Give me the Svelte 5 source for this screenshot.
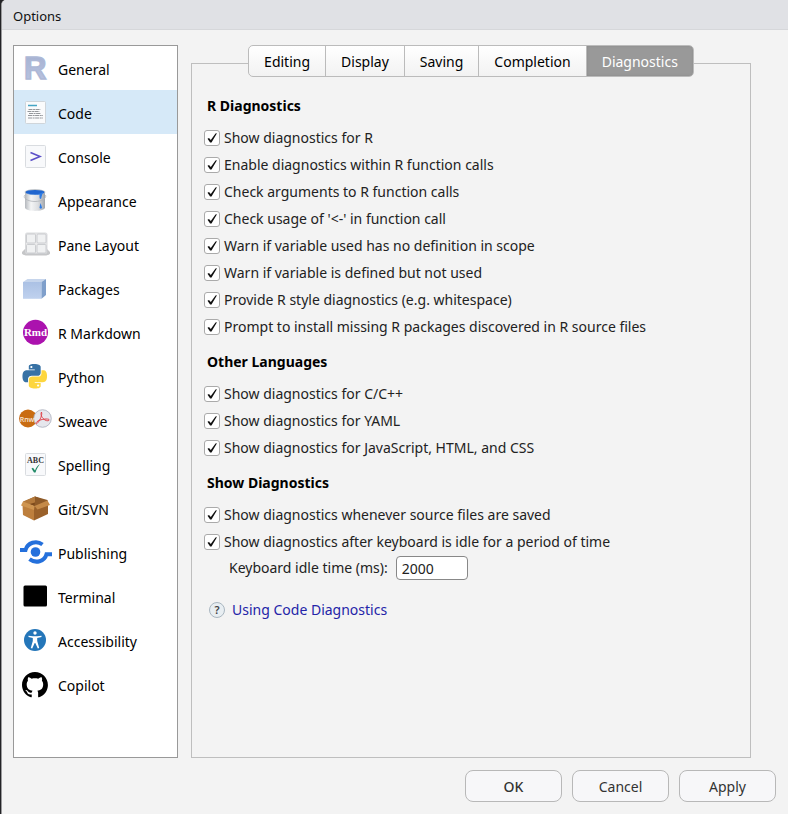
<script>
  const categories = [
    { id: 'general', label: 'General' },
    { id: 'code', label: 'Code' },
    { id: 'console', label: 'Console' },
    { id: 'appearance', label: 'Appearance' },
    { id: 'panes', label: 'Pane Layout' },
    { id: 'packages', label: 'Packages' },
    { id: 'rmarkdown', label: 'R Markdown' },
    { id: 'python', label: 'Python' },
    { id: 'sweave', label: 'Sweave' },
    { id: 'spelling', label: 'Spelling' },
    { id: 'git', label: 'Git/SVN' },
    { id: 'publishing', label: 'Publishing' },
    { id: 'terminal', label: 'Terminal' },
    { id: 'accessibility', label: 'Accessibility' },
    { id: 'copilot', label: 'Copilot' }
  ];
  let category = $state('code');

  const tabs = ['Editing', 'Display', 'Saving', 'Completion', 'Diagnostics'];
  let tab = $state('Diagnostics');

  let sections = $state([
    {
      title: 'R Diagnostics',
      options: [
        { label: 'Show diagnostics for R', on: true },
        { label: 'Enable diagnostics within R function calls', on: true },
        { label: 'Check arguments to R function calls', on: true },
        { label: "Check usage of '<-' in function call", on: true },
        { label: 'Warn if variable used has no definition in scope', on: true },
        { label: 'Warn if variable is defined but not used', on: true },
        { label: 'Provide R style diagnostics (e.g. whitespace)', on: true },
        { label: 'Prompt to install missing R packages discovered in R source files', on: true }
      ]
    },
    {
      title: 'Other Languages',
      options: [
        { label: 'Show diagnostics for C/C++', on: true },
        { label: 'Show diagnostics for YAML', on: true },
        { label: 'Show diagnostics for JavaScript, HTML, and CSS', on: true }
      ]
    },
    {
      title: 'Show Diagnostics',
      options: [
        { label: 'Show diagnostics whenever source files are saved', on: true },
        { label: 'Show diagnostics after keyboard is idle for a period of time', on: true }
      ]
    }
  ]);
  let idle = $state('2000');
</script>

{#snippet icon(id)}
  <svg class="icon" viewBox="0 0 36 28" aria-hidden="true">
    {#if id === 'general'}
      <defs>
        <linearGradient id="r-fill" x1="0" y1="0" x2="0" y2="1">
          <stop offset="0" stop-color="#a3afd0" /><stop offset="1" stop-color="#bcc6e2" />
        </linearGradient>
      </defs>
      <text x="7" y="25" font-family="Liberation Sans" font-weight="700" font-size="31" fill="url(#r-fill)" stroke="#adb8d6" stroke-width="1.5">R</text>
    {:else if id === 'code'}
      <rect x="8.5" y="3.5" width="20" height="22" rx="1" fill="#fafbfc" stroke="#cfd5da" />
      <path d="M11 7.500h9" stroke="#45a5c4" stroke-width="1.5" />
      <path d="M11.500 11.500h12M10.500 13.500h12M12 15.500h12M11 17.500h15M11 20h15" stroke="#94979b" stroke-width="1.200" stroke-dasharray="4 .6 2 .5" />
    {:else if id === 'console'}
      <rect x="8.5" y="3.500" width="20" height="22" rx="1" fill="#f8f9fb" stroke="#d9dce0" />
      <path d="M13.500 10.500l9.500 4-9.500 4" fill="none" stroke="#5c50c8" stroke-width="1.600" />
    {:else if id === 'appearance'}
      <defs>
        <linearGradient id="can"><stop offset="0" stop-color="#b4b8bd" /><stop offset=".3" stop-color="#f4f5f6" /><stop offset=".65" stop-color="#dcdee1" /><stop offset="1" stop-color="#a0a4a9" /></linearGradient>
      </defs>
      <path d="M8 6v15.500c0 4.500 20 4.500 20 0V6z" fill="url(#can)" />
      <ellipse cx="18" cy="6" rx="10.500" ry="3" fill="#c3c8ce" />
      <ellipse cx="18" cy="6.200" rx="9.500" ry="2.300" fill="#2166cf" />
      <path d="M9 7c5 2 13 2 17-1l-1.500 5c0 2.500-2 2.500-2 0V8.500c-4 .8-9.500.6-13.500-1.500z" fill="#2e7be4" />
      <path d="M23.500 17l1.500 4.500c0 1.500-2.500 1.500-2.500 0z" fill="#2e7be4" />
      <path d="M8 9c-3 3 3 6.500 10 6.500s12-3.500 10.500-6.500" fill="none" stroke="#b0b4b9" stroke-width=".8" />
    {:else if id === 'panes'}
      <path d="M5 22l3-3h22l3 3v1.500c0 1-3 2-5 2H10c-2 0-5-1-5-2z" fill="#c5c6c8" />
      <rect x="8.500" y="3" width="21.500" height="20.500" rx="1.500" fill="#ececed" stroke="#d2d3d5" stroke-width=".8" />
      <g fill="#f0f1f2" stroke="#c2c4c8" stroke-width=".8">
        <rect x="9.500" y="4" width="9" height="9" rx="1" /><rect x="20" y="4" width="9" height="9" rx="1" />
        <rect x="9.500" y="14.500" width="9" height="8.500" rx="1" /><rect x="20" y="14.500" width="9" height="8.500" rx="1" />
      </g>
    {:else if id === 'packages'}
      <defs><linearGradient id="box-face" x1="0" y1="0" x2="0" y2="1"><stop offset="0" stop-color="#abc1e4" /><stop offset="1" stop-color="#bfd1ee" /></linearGradient></defs>
      <path d="M6 8h18.500v16.800H6z" fill="url(#box-face)" />
      <path d="M6 8l4.500-3H29l-4.500 3z" fill="#c6d5ec" />
      <path d="M24.500 8L29 5v16l-4.500 3.800z" fill="#7f9fcb" />
    {:else if id === 'rmarkdown'}
      <circle cx="18.500" cy="14.300" r="12.500" fill="#ab12ae" />
      <text x="18.500" y="17.500" text-anchor="middle" font-family="Liberation Serif" font-weight="700" font-size="11" fill="#fff">Rmd</text>
    {:else if id === 'python'}
      <g transform="translate(5.500 2) scale(1.020)">
        <path fill="#3872a5" d="M14.25.18l.9.2.73.26.59.3.45.32.34.34.25.34.16.33.1.3.04.26.02.2-.01.13V8.5l-.05.63-.13.55-.21.46-.26.38-.3.31-.33.25-.35.19-.35.14-.33.1-.3.07-.26.04-.21.02H8.77l-.69.05-.59.14-.5.22-.41.27-.33.32-.27.35-.2.36-.15.37-.1.35-.07.32-.04.27-.02.21v3.06H3.17l-.21-.03-.28-.07-.32-.12-.35-.18-.36-.26-.36-.36-.35-.46-.32-.59-.28-.73-.21-.88-.14-1.05-.05-1.23.06-1.22.16-1.04.24-.87.32-.71.36-.57.4-.44.42-.33.42-.24.4-.16.36-.1.32-.05.24-.01h.16l.06.01h8.16v-.83H6.18l-.01-2.75-.02-.37.05-.34.11-.31.17-.28.25-.26.31-.23.38-.2.44-.18.51-.15.58-.12.64-.1.71-.06.77-.04.84-.02 1.27.05zm-6.3 1.98l-.23.33-.08.41.08.41.23.34.33.22.41.09.41-.09.33-.22.23-.34.08-.41-.08-.41-.23-.33-.33-.22-.41-.09-.41.09z" />
        <path fill="#fdd63e" d="M21.040 6.110l.28.06.32.12.35.18.36.27.36.35.35.47.32.59.28.73.21.88.14 1.04.05 1.23-.06 1.23-.16 1.04-.24.86-.32.71-.36.57-.4.45-.42.33-.42.24-.4.16-.36.09-.32.05-.24.02-.16-.01h-8.22v.82h5.84l.01 2.76.02.36-.05.34-.11.31-.17.29-.25.25-.31.24-.38.2-.44.17-.51.15-.58.13-.64.09-.71.07-.77.04-.84.01-1.27-.04-1.07-.14-.9-.2-.73-.25-.59-.3-.45-.33-.34-.34-.25-.34-.16-.33-.1-.3-.04-.25-.02-.2.01-.13v-5.34l.05-.64.13-.54.21-.46.26-.38.3-.32.33-.24.35-.2.35-.14.33-.1.3-.06.26-.04.21-.02.13-.01h5.84l.69-.05.59-.14.5-.21.41-.28.33-.32.27-.35.2-.36.15-.36.1-.35.07-.32.04-.28.02-.21V6.070h2.09l.14.01zm-6.47 14.25l-.23.33-.08.41.08.41.23.33.33.23.41.08.41-.08.33-.23.23-.33.08-.41-.08-.41-.23-.33-.33-.23-.41-.08-.41.08z" />
      </g>
    {:else if id === 'sweave'}
      <circle cx="11" cy="12.500" r="9" fill="#c96c12" />
      <circle cx="25.500" cy="12.500" r="8.800" fill="#e6e7ed" stroke="#a9adbb" stroke-width=".8" />
      <text x="10" y="15.500" text-anchor="middle" font-family="Open Sans" font-weight="600" font-size="7" fill="#f8e6d2">Rnw</text>
      <path d="M24.500 6c-1.500 3 1 6.500 3.500 8s5 .5 4-.5-7.500-.5-11 1.500-2 4 0 1.500 4.500-7.500 3.500-10.500z" fill="none" stroke="#e0424a" stroke-width="1" />
    {:else if id === 'spelling'}
      <rect x="8.500" y="3.500" width="20" height="22" rx="1" fill="#f8f9fb" stroke="#d9dce0" />
      <text x="18.500" y="13" text-anchor="middle" font-family="Liberation Serif" font-weight="700" font-size="8" fill="#333">ABC</text>
      <path d="M14.500 18.500l1.500-.8 2 2.800c1-3 2.500-5 5-6.500-2 2.500-3.500 5-4.500 8.500h-1.500z" fill="#1f8a66" />
    {:else if id === 'git'}
      <path d="M6 8l12-5.500L31 7.500 19 13z" fill="#7d4a1c" />
      <path d="M5.500 11l11.500 4v11.500L6 21z" fill="#bd7f3d" />
      <path d="M17 13l14-4.500V20l-14 6.500z" fill="#9a612a" />
      <path d="M6 7.500l12-5v6L9 11z" fill="#b47a3c" />
      <path d="M18 2.500L30.500 6 31 8.500 17 13l1-4.500z" fill="#8e5a28" />
      <path d="M6 7.500l11.500 4.500-.5 4L4 11.500z" fill="#cf9550" />
      <path d="M17.500 12L30.500 6.500l2.500 4.500L20.500 15.500z" fill="#c58a48" />
    {:else if id === 'publishing'}
      <circle cx="18.500" cy="14" r="4.800" fill="#2470dc" />
      <path d="M3 12h5.500c2-7.500 11-10 17-5.500" fill="none" stroke="#2470dc" stroke-width="4" />
      <path d="M35 16.200h-5.500c-2 7.500-11 9.500-17 5" fill="none" stroke="#2470dc" stroke-width="4" />
    {:else if id === 'terminal'}
      <rect x="6.500" y="3.500" width="23.500" height="21" rx="1.500" fill="#000" />
    {:else if id === 'accessibility'}
      <circle cx="18" cy="14" r="11" fill="#2476b9" />
      <circle cx="18" cy="7" r="1.700" fill="#fff" />
      <path d="M11.500 9.800l4.500.4h4l4.500-.4v1.100l-4.300 1v3l2 7-1.400.5L18.300 17h-.6l-2.500 5.400-1.400-.5 2-7v-3l-4.300-1z" fill="#fff" />
    {:else}
      <path transform="translate(5 1.700) scale(1.080)" d="M12 .297c-6.630 0-12 5.373-12 12 0 5.303 3.438 9.800 8.205 11.385.6.113.82-.258.82-.577 0-.285-.01-1.040-.015-2.040-3.338.724-4.042-1.610-4.042-1.610C4.422 18.070 3.633 17.700 3.633 17.700c-1.087-.744.084-.729.084-.729 1.205.084 1.838 1.236 1.838 1.236 1.070 1.835 2.809 1.305 3.495.998.108-.776.417-1.305.76-1.605-2.665-.3-5.466-1.332-5.466-5.930 0-1.310.465-2.380 1.235-3.220-.135-.303-.54-1.523.105-3.176 0 0 1.005-.322 3.300 1.230.96-.267 1.980-.399 3-.405 1.020.006 2.040.138 3 .405 2.280-1.552 3.285-1.230 3.285-1.230.645 1.653.24 2.873.12 3.176.765.84 1.230 1.910 1.230 3.220 0 4.610-2.805 5.625-5.475 5.920.42.36.81 1.096.81 2.220 0 1.606-.015 2.896-.015 3.286 0 .315.21.69.825.57C20.565 22.092 24 17.592 24 12.297c0-6.627-5.373-12-12-12" />
    {/if}
  </svg>
{/snippet}

<div class="dialog" role="dialog" aria-labelledby="dialog-title">
  <header id="dialog-title">Options</header>

  <div class="content">
    <nav>
      {#each categories as c}
        <button class="category" class:selected={category === c.id} onclick={() => (category = c.id)}>
          {@render icon(c.id)}
          <span>{c.label}</span>
        </button>
      {/each}
    </nav>

    <main>
      <div class="tabs" role="tablist">
        {#each tabs as t}
          <button role="tab" aria-selected={tab === t} class:active={tab === t} onclick={() => (tab = t)}>{t}</button>
        {/each}
      </div>

      <div class="panel" role="tabpanel">
        {#each sections as s}
          <section>
            <h2>{s.title}</h2>
            {#each s.options as o}
              <label class="option">
                <span class="check">
                  <input type="checkbox" bind:checked={o.on} />
                  <svg viewBox="0 0 16 16" aria-hidden="true"><path d="M3.500 8.800l1.500-.9 1.800 2L11.500 3.600l1.500-.4-5.500 9.300h-1.400z" /></svg>
                </span>
                {o.label}
              </label>
            {/each}
          </section>
        {/each}

        <div class="idle">
          <label for="idle">Keyboard idle time (ms):</label>
          <input id="idle" type="text" bind:value={idle} />
        </div>

        <a class="help" href="#help"><span class="mark" aria-hidden="true">?</span>Using Code Diagnostics</a>
      </div>
    </main>
  </div>

  <footer>
    <button class="ok">OK</button>
    <button>Cancel</button>
    <button>Apply</button>
  </footer>
</div>

<style>
  :global(body) {
    background: #232326;
  }
  .dialog,
  button,
  input {
    font-family: 'Noto Sans', 'Open Sans', sans-serif;
    font-size: 14px;
  }
  .dialog {
    box-sizing: border-box;
    display: flex;
    flex-direction: column;
    min-height: 100vh;
    margin-left: 1px;
    border-left: 1px solid #9a9a9c;
    border-top-left-radius: 5px;
    background: #f3f3f3;
    color: #222;
    line-height: 20px;
    overflow: hidden;
  }
  header {
    padding: 6px 11px 3px;
    border-bottom: 1px solid #d6d7da;
    background: #e0e1e5;
    font-size: 13px;
    color: #111;
  }
  .content {
    display: flex;
    flex: 1;
    gap: 13px;
    padding: 15px 37px 0 11px;
  }
  nav {
    box-sizing: border-box;
    flex: 0 0 165px;
    border: 1px solid #999;
    background: #fff;
  }
  .category {
    display: flex;
    align-items: center;
    gap: 5px;
    width: 100%;
    height: 44px;
    padding: 0 3px;
    border: 0;
    background: none;
    color: #000;
    text-align: left;
  }
  .category span {
    padding-top: 3px;
  }
  .category.selected {
    background: #d6e9f8;
  }
  .icon {
    flex: none;
    width: 36px;
    height: 28px;
    overflow: visible;
  }
  main {
    display: flex;
    flex: 1;
    flex-direction: column;
    min-width: 0;
  }
  .tabs {
    display: flex;
    align-self: center;
    z-index: 1;
    border: 1px solid #bbb;
    border-radius: 5px;
    background: linear-gradient(#fff, #f2f2f2);
    overflow: hidden;
  }
  .tabs button {
    height: 30px;
    padding: 0 15px;
    border: 0;
    border-right: 1px solid #bbb;
    background: none;
    color: #000;
  }
  .tabs button:last-child {
    border-right: 0;
  }
  .tabs .active {
    background: #999;
    color: #fff;
    box-shadow: inset 0 0 3px #888;
  }
  .panel {
    flex: 1;
    margin-top: -14px;
    padding: 32px 12px 12px;
    border: 1px solid #bebebe;
  }
  section + section {
    margin-top: 12px;
  }
  h2 {
    margin: 0 3px 9px;
    font-size: 14px;
    line-height: 20px;
    color: #000;
  }
  .option {
    display: flex;
    align-items: center;
    gap: 4px;
    height: 26px;
  }
  .option + .option {
    margin-top: 1px;
  }
  .check {
    display: grid;
  }
  .check input,
  .check svg {
    grid-area: 1 / 1;
    width: 16px;
    height: 16px;
  }
  .check input {
    box-sizing: border-box;
    margin: 0;
    border: 1px solid #aaa;
    border-radius: 3px;
    background: #fff;
    appearance: none;
  }
  .check svg {
    fill: #111;
    pointer-events: none;
    visibility: hidden;
  }
  .check input:checked + svg {
    visibility: visible;
  }
  .idle {
    display: flex;
    align-items: center;
    gap: 8px;
    margin: 1px 0 0 25px;
  }
  .idle input {
    box-sizing: border-box;
    width: 72px;
    height: 24px;
    padding: 0 5px;
    border: 1px solid #888;
    border-radius: 4px;
    background: #fff;
    color: #222;
  }
  .help {
    display: inline-flex;
    align-items: center;
    gap: 7px;
    margin: 20px 5px 0;
    color: #2424a8;
    text-decoration: none;
  }
  .mark {
    box-sizing: border-box;
    width: 16px;
    height: 16px;
    border: 1px solid #a9b6c0;
    border-radius: 50%;
    background: #e8eef2;
    color: #444;
    font-size: 11px;
    font-weight: 600;
    line-height: 14px;
    text-align: center;
  }
  footer {
    display: flex;
    justify-content: flex-end;
    gap: 10px;
    padding: 12px;
  }
  footer button {
    width: 97px;
    height: 32px;
    border: 1px solid #b8b8b8;
    border-radius: 8px;
    background: #f7f7f9;
    color: #333;
  }
  footer .ok {
    font-weight: 500;
  }
</style>
